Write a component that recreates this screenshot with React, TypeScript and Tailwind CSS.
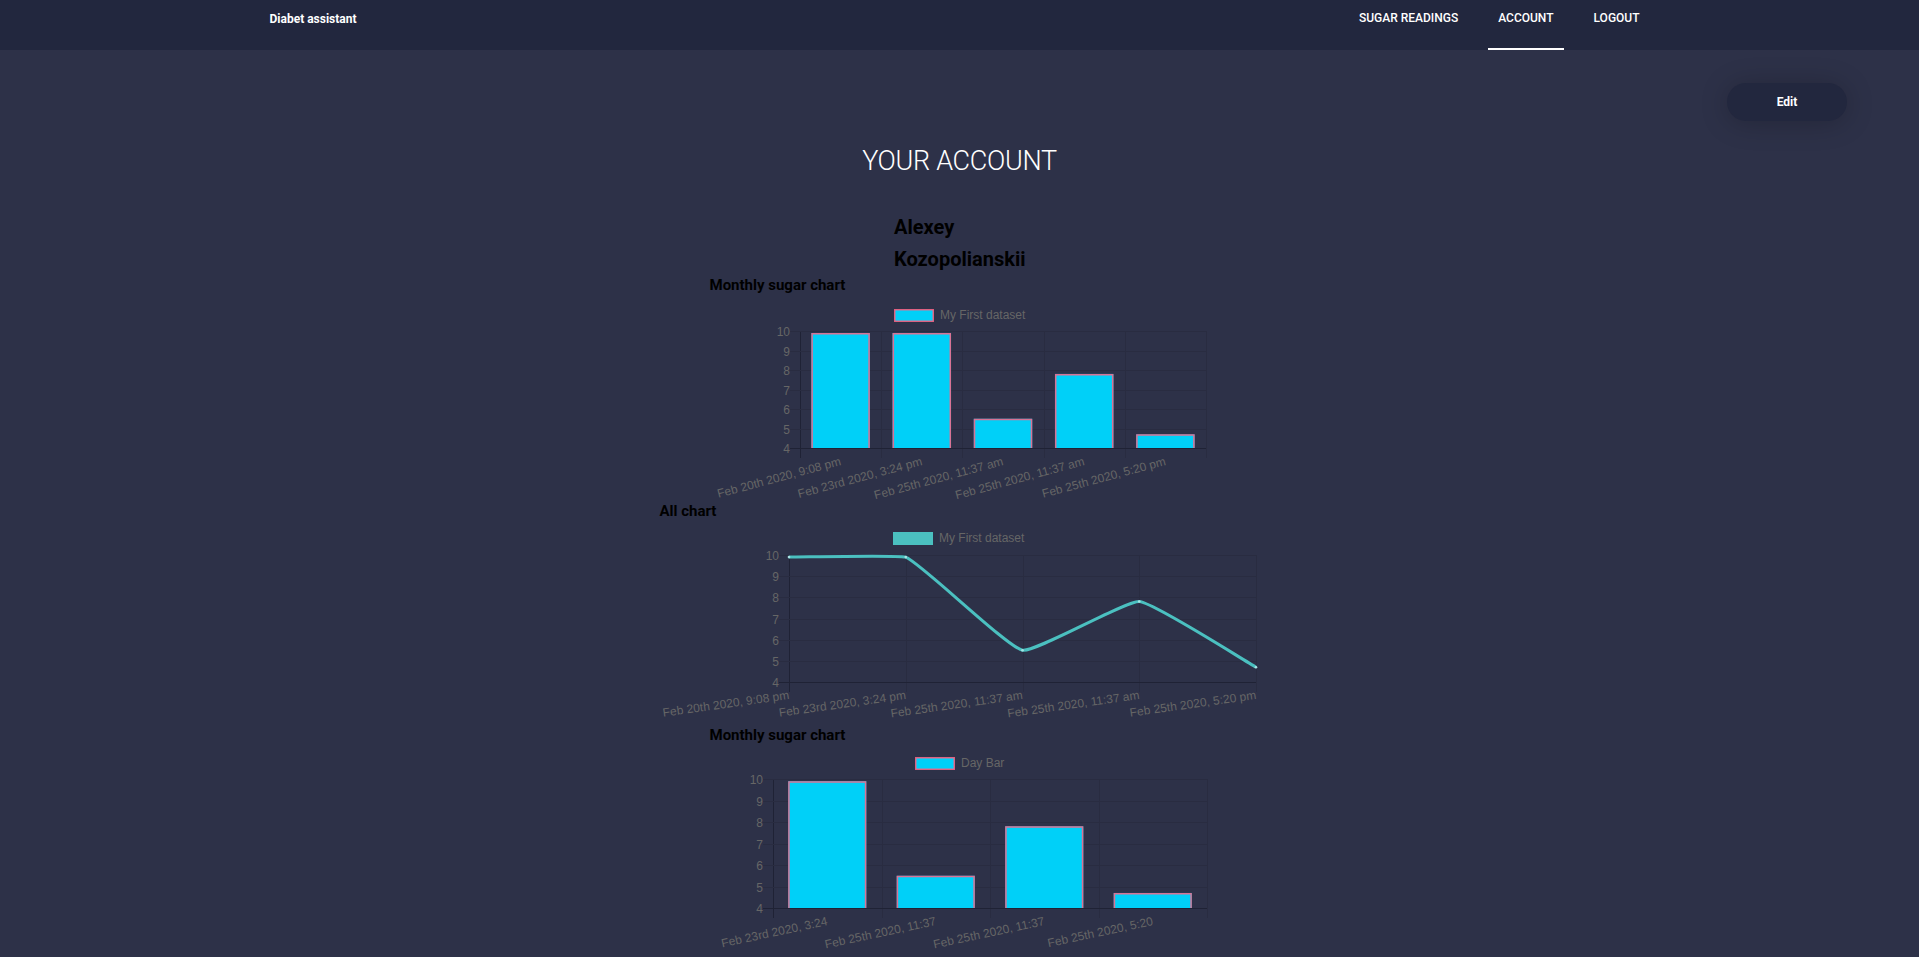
const GRID = "#292c41";
const AXIS = "#1f2235";
const LABEL = "#666666";
const CYAN = "#00d0f8";
const PINK = "rgba(255,99,132,0.85)";
const TEAL = "#4bc0c0";
const FONT = "'Liberation Sans', Arial, sans-serif";

type Frame = { x0: number; x1: number; y0: number; y1: number };

function crisp(v: number) {
  return Math.round(v) + 0.5;
}

function YTicks({ x0, x1, y0, y1 }: Frame) {
  const unit = (y1 - y0) / 6;
  const values = [4, 5, 6, 7, 8, 9, 10];
  return (
    <g>
      {values.map((v) => {
        const y = crisp(y1 - (v - 4) * unit);
        return (
          <g key={v}>
            <line x1={x0 - 10} x2={x1} y1={y} y2={y} stroke={v === 4 ? AXIS : GRID} strokeWidth={1} />
            <text
              x={x0 - 10}
              y={y}
              textAnchor="end"
              dominantBaseline="central"
              fill={LABEL}
              fontSize={12}
              fontFamily={FONT}
            >
              {v}
            </text>
          </g>
        );
      })}
    </g>
  );
}

function Legend({ x, y, text, fill, stroke }: { x: number; y: number; text: string; fill: string; stroke: string }) {
  return (
    <g>
      <rect x={x + 0.75} y={y + 0.75} width={38.5} height={11.5} fill={fill} stroke={stroke} strokeWidth={1.5} />
      <text x={x + 46} y={y + 6} dominantBaseline="central" fill={LABEL} fontSize={12} fontFamily={FONT}>
        {text}
      </text>
    </g>
  );
}

function XLabel({ x, y, rot, text }: { x: number; y: number; rot: number; text: string }) {
  return (
    <text
      transform={`translate(${x},${y}) rotate(${-rot})`}
      textAnchor="end"
      dominantBaseline="central"
      fill={LABEL}
      fontSize={12}
      fontFamily={FONT}
    >
      {text}
    </text>
  );
}

type BarProps = Frame & {
  width: number;
  height: number;
  legendX: number;
  legendY: number;
  legend: string;
  labels: string[];
  values: number[];
  rot: number;
  labelY: number;
};

function BarChart(p: BarProps) {
  const n = p.values.length;
  const cw = (p.x1 - p.x0) / n;
  const unit = (p.y1 - p.y0) / 6;
  return (
    <svg width={p.width} height={p.height} className="block">
      <Legend x={p.legendX} y={p.legendY} text={p.legend} fill={CYAN} stroke={PINK} />
      {Array.from({ length: n + 1 }).map((_, i) => {
        const x = crisp(p.x0 + i * cw);
        return (
          <line key={i} x1={x} x2={x} y1={p.y0} y2={p.y1 + 10} stroke={i === 0 ? AXIS : GRID} strokeWidth={1} />
        );
      })}
      <YTicks x0={p.x0} x1={p.x1} y0={p.y0} y1={p.y1} />
      {p.values.map((v, i) => {
        const left = p.x0 + i * cw + cw * 0.14;
        const right = left + cw * 0.72;
        const top = p.y1 - (v - 4) * unit;
        return (
          <g key={i}>
            <rect x={left} y={top} width={right - left} height={p.y1 - top} fill={CYAN} />
            <path
              d={`M${left + 0.75},${p.y1} V${top + 0.75} H${right - 0.75} V${p.y1}`}
              fill="none"
              stroke={PINK}
              strokeWidth={1.5}
            />
          </g>
        );
      })}
      {p.labels.map((l, i) => (
        <XLabel key={i} x={p.x0 + i * cw + cw / 2} y={p.labelY} rot={p.rot} text={l} />
      ))}
    </svg>
  );
}

type Pt = { x: number; y: number };

function splinePath(pts: Pt[], t: number, top: number, bottom: number) {
  const clamp = (y: number) => Math.max(top, Math.min(bottom, y));
  const cps = pts.map((c, i) => {
    const prev = pts[i - 1] ?? c;
    const next = pts[i + 1] ?? c;
    const d01 = Math.hypot(c.x - prev.x, c.y - prev.y);
    const d12 = Math.hypot(next.x - c.x, next.y - c.y);
    const sum = d01 + d12 || 1;
    const fa = (t * d01) / sum;
    const fb = (t * d12) / sum;
    return {
      prev: { x: c.x - fa * (next.x - prev.x), y: clamp(c.y - fa * (next.y - prev.y)) },
      next: { x: c.x + fb * (next.x - prev.x), y: clamp(c.y + fb * (next.y - prev.y)) },
    };
  });
  let d = `M${pts[0].x},${pts[0].y}`;
  for (let i = 1; i < pts.length; i++) {
    const a = cps[i - 1].next;
    const b = cps[i].prev;
    d += ` C${a.x},${a.y} ${b.x},${b.y} ${pts[i].x},${pts[i].y}`;
  }
  return d;
}

function LineChart(p: BarProps) {
  const n = p.values.length;
  const step = (p.x1 - p.x0) / (n - 1);
  const unit = (p.y1 - p.y0) / 6;
  const pts = p.values.map((v, i) => ({ x: p.x0 + i * step, y: p.y1 - (v - 4) * unit }));
  return (
    <svg width={p.width} height={p.height} className="block">
      <Legend x={p.legendX} y={p.legendY} text={p.legend} fill={TEAL} stroke={TEAL} />
      {pts.map((pt, i) => {
        const x = crisp(pt.x);
        return (
          <line key={i} x1={x} x2={x} y1={p.y0} y2={p.y1 + 10} stroke={i === 0 ? AXIS : GRID} strokeWidth={1} />
        );
      })}
      <YTicks x0={p.x0} x1={p.x1} y0={p.y0} y1={p.y1} />
      <path d={splinePath(pts, 0.12, p.y0, p.y1)} fill="none" stroke={TEAL} strokeWidth={3} />
      {pts.map((pt, i) => (
        <circle key={i} cx={pt.x} cy={pt.y} r={1.3} fill="#a8e4e4" />
      ))}
      {p.labels.map((l, i) => (
        <XLabel key={i} x={p.x0 + i * step} y={p.labelY} rot={p.rot} text={l} />
      ))}
    </svg>
  );
}

const readings = [9.9, 9.9, 5.5, 7.8, 4.7];
const readingLabels = [
  "Feb 20th 2020, 9:08 pm",
  "Feb 23rd 2020, 3:24 pm",
  "Feb 25th 2020, 11:37 am",
  "Feb 25th 2020, 11:37 am",
  "Feb 25th 2020, 5:20 pm",
];
const dayValues = [9.9, 5.5, 7.8, 4.7];
const dayLabels = ["Feb 23rd 2020, 3:24", "Feb 25th 2020, 11:37", "Feb 25th 2020, 11:37", "Feb 25th 2020, 5:20"];

export default function App() {
  return (
    <div className="min-h-screen bg-[#2d3148] font-['Roboto',sans-serif]">
      <nav className="h-[50px] bg-[#22273e]">
        <div className="mx-auto flex h-full w-[1380px] justify-between">
          <a className="pt-[12px] text-[12px] font-bold leading-[14px] text-white">Diabet assistant</a>
          <ul className="flex gap-[20px]">
            <li>
              <a className="block h-[50px] border-b-2 border-transparent px-[10px] pt-[11px] text-[12px] font-medium leading-[14px] text-white">
                SUGAR READINGS
              </a>
            </li>
            <li>
              <a className="block h-[50px] border-b-2 border-white px-[10px] pt-[11px] text-[12px] font-medium leading-[14px] text-white">
                ACCOUNT
              </a>
            </li>
            <li>
              <a className="block h-[50px] border-b-2 border-transparent px-[10px] pt-[11px] text-[12px] font-medium leading-[14px] text-white">
                LOGOUT
              </a>
            </li>
          </ul>
        </div>
      </nav>

      <main className="pb-10">
        <div className="flex justify-end pr-[72px] pt-[33px]">
          <button className="h-[38px] w-[120px] rounded-full bg-[#22273e] text-[12px] font-bold text-white shadow-[0_2px_28px_rgba(0,0,0,0.22)]">
            Edit
          </button>
        </div>

        <h1 className="mt-[23px] text-center text-[27px] font-light leading-[34px] tracking-[-0.3px] text-white">
          YOUR ACCOUNT
        </h1>

        <div className="mx-auto mt-[33px] w-[131px] text-[20px] font-bold leading-[32px] text-black">
          <div>Alexey</div>
          <div className="whitespace-nowrap">Kozopolianskii</div>
        </div>

        <section className="mx-auto w-[520px]">
          <h3 className="pl-[10px] text-[15px] font-bold leading-[20px] text-black">Monthly sugar chart</h3>
          <BarChart
            width={520}
            height={206}
            x0={100}
            x1={506}
            y0={36}
            y1={153}
            legendX={194}
            legendY={14}
            legend="My First dataset"
            labels={readingLabels}
            values={readings}
            rot={15}
            labelY={166}
          />
        </section>

        <section className="mx-auto w-[620px]">
          <h3 className="pl-[10px] text-[15px] font-bold leading-[20px] text-black">All chart</h3>
          <LineChart
            width={620}
            height={204}
            x0={139}
            x1={606}
            y0={34}
            y1={161}
            legendX={243}
            legendY={11}
            legend="My First dataset"
            labels={readingLabels}
            values={readings}
            rot={8}
            labelY={174}
          />
        </section>

        <section className="mx-auto w-[520px]">
          <h3 className="pl-[10px] text-[15px] font-bold leading-[20px] text-black">Monthly sugar chart</h3>
          <BarChart
            width={520}
            height={230}
            x0={73}
            x1={507}
            y0={34}
            y1={163}
            legendX={215}
            legendY={12}
            legend="Day Bar"
            labels={dayLabels}
            values={dayValues}
            rot={12}
            labelY={176}
          />
        </section>
      </main>
    </div>
  );
}
